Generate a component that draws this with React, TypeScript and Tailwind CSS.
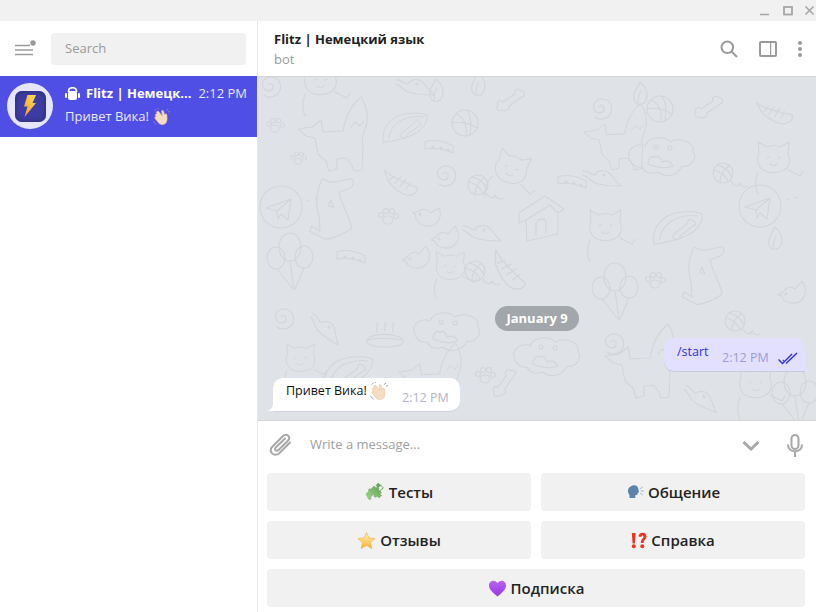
import React from "react";

const D = ({ x, y, s = 1, r = 0, children }: { x: number; y: number; s?: number; r?: number; children: React.ReactNode }) => (
  <g transform={`translate(${x} ${y}) rotate(${r}) scale(${s})`}>{children}</g>
);
const Spiral = () => <path d="M1 1c2-3 6-1 5 3-1 4-8 4-10-1-2-6 3-11 9-10 7 1 10 7 8 13-2 7-11 9-16 5" />;
const Bone = () => <path d="M-14 3c-4 2-7-3-4-5-2-4 3-6 5-3l12-8c-2-4 4-7 6-3 4-1 5 5 1 6l-13 9c1 4-4 6-7 4z" transform="translate(4 3)" />;
const Ball = () => <g><circle r="13" /><path d="M-9-9c6 2 12 10 10 22M2-13c4 6 5 14 3 25M-13 0c8-2 18 0 25 5" /></g>;
const Paw = () => <g><ellipse cx="0" cy="3" rx="5" ry="4" /><circle cx="-7" cy="-2" r="2.5" /><circle cx="-2" cy="-6" r="2.5" /><circle cx="4" cy="-6" r="2.5" /><circle cx="8" cy="-1" r="2.5" /></g>;
const Fox = () => <path d="M-40-10l14-2 9-7 2 12 20-1c3-16 8-25 18-34 6 10 9 22 3 35-1 4-3 8-1 14l-1 24-8 1-2-6-6-7-9 1 0 10-8 2-3-10-8-7-3-16-9-2z M26-18l-4 5-5-4-4 5" />;
const Dog = () => <path d="M-16-24l7 3 6 0 13-3c5-1 5 7 0 9l-10 4c3 14 11 24 12 34-6 5-22 12-26 10l-14-7 2-5 8 5-1-14c-3-12-4-20 3-36z M-8-4l-2 6 5 1z" />;
const Plane = () => <g><circle r="21" /><path d="M-15 1l25-9-3 21-7-6-3 5-1-8zM-4 4L10-8" /><path d="M26-7l3 1M34-9l3 1" /></g>;
const Balloons = () => <g><ellipse cx="0" cy="-14" rx="11" ry="14" /><ellipse cx="-14" cy="-3" rx="9" ry="11" /><ellipse cx="14" cy="-4" rx="9" ry="11" /><path d="M0 0l4 28M-13 8l16 20M14 7L5 28" /></g>;
const House = () => <g><path d="M-22-2L4-19l19 13-6 4v21L-14 26l-1-21-7 3zM-15 5L9-10l8 8" /><path d="M-5 20v-12c3-5 9-5 10-1v11" /></g>;
const Fish = () => <g><path d="M-12-16l5 8c6 7 14 15 19 19 2 4-4 7-10 5-7-3-11-12-14-20z" /><path d="M-10-5l6-2M-7 0l8-4M-3 5l8-5M2 9l6-4" /></g>;
const Collar = () => <g><path d="M-14-4c8-3 20-1 28 4v7c-8-4-20-6-28-4z" /><circle cx="-6" cy="1" r="1" /><circle cx="2" cy="2" r="1" /><circle cx="9" cy="4" r="1" /></g>;
const Yarn = () => <g><circle r="10" /><path d="M-9-3c6 1 13 7 14 12M-6-8c7 1 13 7 15 12M-3 9c0-7 5-14 9-16" /><path d="M8 8c3 6 8 6 9 2 2 4 5 5 8 3" /></g>;
const Mouse = () => <g><path d="M-17-5c6-1 7 4 12 4 3-5 10-6 14-2 3 2 6 8 12 13-10 0-18 0-26-3-5-2-7-6-12-8" /><circle cx="4" cy="-1" r="1" /></g>;
const Bird = () => <g><path d="M-12 4l5-3c3-5 8-6 12-3l7-8 3 6c2 8-3 17-13 16-6 0-10-4-10-7z" /><circle cx="-4" cy="3" r="1" /></g>;
const Cat = () => <g><path d="M-15-19l9 5c5-2 9-2 13 0l9-5-1 12c3 7 1 14-6 17-8 3-18 2-22-4-3-5-3-10-1-14z" /><path d="M-6-3l2-1M5-3l2-1M-3 3c2 2 5 2 7 0" /><path d="M-15 11c-3 8-3 16 0 22M15 9l12 6 3-5" /></g>;
const Bowl = () => <g><path d="M-26 18c-3-12 5-25 18-30 14-4 26-2 30 0 2 6-4 16-14 21-11 5-22 8-34 9z" /><path d="M-20 13c0-8 8-18 18-21 8-3 14-3 20-2" /><path d="M-5 7l13-10c-1-4 4-5 5-2 4 0 3 5 0 5L0 10c1 3-3 5-5 3-3 0-3-4 0-6z" /></g>;
const Cloud = () => <g><path d="M-30 4c-5-10 6-18 15-14 3-9 19-11 25-4 8-5 25-1 23 10 5 7-3 16-11 14-4 9-16 13-24 6-8 3-14 0-16-5-5 1-10-2-12-7z" /><path d="M-12 8c0-6 4-9 7-7 4-2 6 1 7 5 5-2 9 0 11 4-8 3-18 1-25-2z" /><circle cx="-4" cy="-9" r="2" /><circle cx="10" cy="-8" r="2" /></g>;
const Pie = () => <g><path d="M-18 4c4-7 28-8 36 0 2 4-4 7-18 7-12 0-20-3-18-7zM-18 4c12-3 24-2 36 0" /><path d="M-8-4c-2-3 2-5 0-9M0-5c-2-3 2-5 0-9M8-4c-2-3 2-5 0-9" /></g>;
const Leaf = () => <path d="M0-14c5 4 9 11 6 18-2 5-9 6-11 2-4-7 2-14 5-20zM-2 8c0-6 1-10 3-13" />;

function Doodles() {
  return (
    <svg className="absolute inset-0" width="558" height="344" viewBox="258 76 558 344" fill="none" stroke="#d1d6da" strokeWidth="1.1" strokeLinecap="round" strokeLinejoin="round">
      <D x={267} y={83}><Spiral /></D>
      <D x={320} y={82}><Cat /></D>
      <D x={338} y={138}><Fox /></D>
      <D x={407} y={125} s={0.9}><Bowl /></D>
      <D x={465} y={122}><Ball /></D>
      <D x={512} y={103}><Bone /></D>
      <D x={436} y={92}><Leaf /></D>
      <D x={478} y={86}><Leaf /></D>
      <D x={413} y={84}><Mouse /></D>
      <D x={439} y={145}><Collar /></D>
      <D x={275} y={125} s={0.9}><Paw /></D>
      <D x={298} y={158} s={0.8}><Paw /></D>
      <D x={401} y={180} r={-20}><Fish /></D>
      <D x={442} y={172}><Spiral /></D>
      <D x={478} y={184}><Yarn /></D>
      <D x={510} y={170} r={20}><Cat /></D>
      <D x={339} y={203} s={1.05}><Dog /></D>
      <D x={281} y={206}><Plane /></D>
      <D x={388} y={216}><Paw /></D>
      <D x={425} y={212} r={20}><Bird /></D>
      <D x={541} y={214}><House /></D>
      <D x={480} y={230}><Mouse /></D>
      <D x={443} y={235}><Bird /></D>
      <D x={414} y={255}><Bird /></D>
      <D x={290} y={260}><Balloons /></D>
      <D x={351} y={255}><Collar /></D>
      <D x={510} y={268} s={1.2}><Fish /></D>
      <D x={475} y={270}><Yarn /></D>
      <D x={450} y={268} s={0.9}><Cat /></D>
      <D x={598} y={105}><Spiral /></D>
      <D x={620} y={140} s={0.9}><Fox /></D>
      <D x={660} y={108}><Ball /></D>
      <D x={710} y={110}><Bone /></D>
      <D x={775} y={110} r={-30}><Fish /></D>
      <D x={640} y={95}><Leaf /></D>
      <D x={660} y={155}><Cloud /></D>
      <D x={600} y={175}><Mouse /></D>
      <D x={723} y={172}><Yarn /></D>
      <D x={773} y={160}><Cat /></D>
      <D x={760} y={205}><Plane /></D>
      <D x={605} y={228}><Cat /></D>
      <D x={680} y={225}><Bowl /></D>
      <D x={572} y={180}><Collar /></D>
      <D x={615} y={290}><Balloons /></D>
      <D x={710} y={270}><Dog /></D>
      <D x={655} y={280}><Paw /></D>
      <D x={790} y={290}><Bird /></D>
      <D x={775} y={240}><Leaf /></D>
      <D x={445} y={330}><Cloud /></D>
      <D x={385} y={335}><Pie /></D>
      <D x={300} y={360} s={0.9}><Cat /></D>
      <D x={280} y={315}><Spiral /></D>
      <D x={325} y={325} r={30}><Mouse /></D>
      <D x={350} y={370}><Bowl /></D>
      <D x={435} y={380} s={0.9}><Fox /></D>
      <D x={485} y={375}><Paw /></D>
      <D x={507} y={385} r={-20}><Bone /></D>
      <D x={545} y={355}><Cloud /></D>
      <D x={610} y={340}><Spiral /></D>
      <D x={645} y={365}><Fox /></D>
      <D x={700} y={395} r={20}><Mouse /></D>
      <D x={755} y={385}><Cat /></D>
      <D x={795} y={395}><Balloons /></D>
      <D x={735} y={320}><Yarn /></D>
    </svg>
  );
}

const Wave = ({ size }: { size: number }) => (
  <svg width={size} height={size} viewBox="0 0 20 20" className="inline-block shrink-0">
    <path d="M6 3.5l4.5 5.5-1-5c-.3-1.5 1.6-2 2.2-.6l1.3 4.1c.4-1.5 2.4-1.3 2.5.3.2 3 .6 5.5-.6 8-1.5 3-5.4 3.6-8.2 1.5L2.2 11.6c-1-1.1.4-2.4 1.5-1.5L2.8 8.4c-.9-1.2.6-2.5 1.7-1.5L3.9 5.5c-.6-1.3 1.1-2.4 2.1-2z" fill="#f6dcc1" stroke="#e3bd98" strokeWidth=".5" />
    <path d="M2 2.5L3.6 1M5.5 1l1-1M15 2.5l1.5-1M17 4.5l1.5-.7" stroke="#8a93b0" strokeWidth=".9" strokeLinecap="round" />
    <path d="M1 15c.5 1.3 1.2 2.2 2.5 3" stroke="#8a93b0" strokeWidth=".9" fill="none" strokeLinecap="round" />
  </svg>
);

const Puzzle = () => (
  <svg width="20" height="20" viewBox="0 0 20 20">
    <defs><linearGradient id="pz" x1="0" y1="1" x2="1" y2="0"><stop offset="0" stopColor="#a8d58e" /><stop offset="1" stopColor="#4f9a45" /></linearGradient></defs>
    <path d="M1 12l3-3c-1.500-1.500 .5-3 1.800-1.800L9 4l2 2c1.500-2 4-.5 2.500 1.500L15 9l3-3.500-2-2c1.500-1.500 0 0 0 0L13 1l-2 2.500 2 2 3-2 2.500 2.500-3.500 3 1.500 1.500c-2 .8-1.500 3.500.5 2.500l-3 3-2-2c-.5 2-3.500 1.500-3-.5l-1-1-2.500 3c1.500 1.500-.5 3-2 1.500z" fill="url(#pz)" stroke="#5d9f53" strokeWidth=".4" />
  </svg>
);
const Star = () => (
  <svg width="19" height="19" viewBox="0 0 20 20">
    <defs><linearGradient id="st" x1="0" y1="0" x2="0" y2="1"><stop offset="0" stopColor="#fff1b8" /><stop offset="1" stopColor="#f9b531" /></linearGradient></defs>
    <path d="M10 1.500l2.600 5.800 6.400.7-4.800 4.200 1.400 6.200L10 15.200l-5.600 3.200 1.400-6.200L1 8l6.400-.7z" fill="url(#st)" stroke="#efb046" strokeWidth=".7" strokeLinejoin="round" />
  </svg>
);
const Speaking = () => (
  <svg width="18" height="18" viewBox="0 0 18 18">
    <path d="M6.500 2.500c3.500-1 6 1.200 6 4.300 0 1 .7 1.800.5 2.500l-1.300.4c.2 1.500-.3 2.500-2.300 2.300l-.2 3H3.500v-3C1.500 9.500.5 4.500 6.500 2.500z" fill="#5d84a8" />
    <path d="M14.500 5.500l2-1.300M15 8h2.500M14.500 10.500l2 1.300" stroke="#9fb2c4" strokeWidth=".9" strokeLinecap="round" />
  </svg>
);
const Heart = () => (
  <svg width="19" height="19" viewBox="0 0 20 20">
    <defs><linearGradient id="ht" x1="0" y1="0" x2="0" y2="1"><stop offset="0" stopColor="#b765ee" /><stop offset="1" stopColor="#9b35e8" /></linearGradient></defs>
    <path d="M10 18.500C6 15 1 11.500 1 6.700 1 3.700 3.300 1.800 5.700 1.800c1.900 0 3.400 1 4.300 2.600.9-1.600 2.400-2.600 4.300-2.600C16.700 1.800 19 3.700 19 6.700c0 4.800-5 8.300-9 11.800z" fill="url(#ht)" />
  </svg>
);
const Interrobang = () => (
  <svg width="16" height="17" viewBox="0 0 16 17" fill="#e5391f">
    <path d="M.8 1h3.900l-.8 10.500H1.600z" />
    <circle cx="2.800" cy="14.200" r="2" />
    <path d="M7.500 4.500C7.500 2 9.500.8 11.500.8c2.400 0 4 1.500 4 3.700 0 2.800-3 3.300-2.900 6.500h-2.700c-.3-3.800 2.500-4.400 2.500-6.200 0-.8-.4-1.400-1-1.400s-1 .6-1 1.700z" />
    <circle cx="11.300" cy="14.200" r="2" />
  </svg>
);

const KeyButton = ({ icon, label, className = "" }: { icon: React.ReactNode; label: string; className?: string }) => (
  <div className={`h-[38px] flex items-center justify-center gap-[4px] rounded-[4px] bg-[#f1f1f1] text-[15px] font-semibold text-[#222] ${className}`}>
    {icon}
    <span>{label}</span>
  </div>
);

export default function App() {
  return (
    <div className="w-[816px] h-[612px] overflow-hidden flex flex-col bg-white text-[13px] font-['Open_Sans',sans-serif]">
      <div className="h-[21px] shrink-0 bg-[#f1f1f1] flex items-center justify-end">
        <svg width="60" height="21" viewBox="0 0 60 21" fill="none" stroke="#a6a6a6" strokeWidth="1.500">
          <path d="M4 14.500h9" />
          <rect x="28" y="7" width="8" height="7.500" strokeWidth="1.800" />
          <path d="M49.500 6.500l8 8M57.500 6.500l-8 8" strokeWidth="1.600" />
        </svg>
      </div>
      <div className="flex flex-1 min-h-0">
        <aside className="w-[258px] shrink-0 border-r border-[#e6e6e6] flex flex-col">
          <div className="h-[55px] shrink-0 flex items-center pl-[15px] pr-[11px]">
            <svg width="21" height="17" viewBox="0 0 21 17" className="shrink-0">
              <path d="M0 5.500h15M0 10h18M0 14.500h18" stroke="#9a9a9a" strokeWidth="1.700" fill="none" />
              <circle cx="18" cy="3" r="2.700" fill="#9a9a9a" />
            </svg>
            <div className="ml-[15px] flex-1 h-[32px] rounded-[4px] bg-[#f1f1f1] flex items-center pl-[14px] text-[#9a9a9a] text-[13px]">Search</div>
          </div>
          <div className="h-[61px] shrink-0 bg-[#4f4fe6] flex text-white pl-[7px] pr-[10px] pt-[7px]">
            <div className="relative w-[46px] h-[46px] shrink-0 rounded-full bg-[#e5e5fb] flex items-center justify-center">
              <div className="w-[31px] h-[31px] rounded-[7px] bg-[#3c3ca4] flex items-center justify-center shadow-[inset_0_0_5px_#2a2a66]">
                <svg width="14" height="22" viewBox="0 0 14 22">
                  <defs><linearGradient id="bolt" x1="1" y1="0" x2="0" y2="1"><stop offset="0" stopColor="#ffe04d" /><stop offset="1" stopColor="#f59a3c" /></linearGradient></defs>
                  <path d="M4.500 0H13L9.500 8H13L1.500 22 4.500 11.500H1z" fill="url(#bolt)" />
                </svg>
              </div>
            </div>
            <div className="ml-[12px] flex-1 min-w-0 flex flex-col">
              <div className="h-[21px] flex items-center justify-between">
                <div className="flex items-center">
                  <svg width="15" height="14" viewBox="0 0 15 14" className="shrink-0 mr-[6px]">
                    <path d="M3.500 5V4.500C3.500-.5 11.500-.5 11.500 4.500V5" stroke="#fff" strokeWidth="1.600" fill="none" />
                    <rect x="3" y="4" width="9" height="9" rx="2" fill="#fff" />
                    <rect x="0" y="6" width="2" height="5" rx="1" fill="#fff" />
                    <rect x="13" y="6" width="2" height="5" rx="1" fill="#fff" />
                  </svg>
                  <span className="font-bold text-[13px] whitespace-nowrap">Flitz | Немецк...</span>
                </div>
                <span className="text-[13px] text-[#e8e8ff] whitespace-nowrap">2:12 PM</span>
              </div>
              <div className="h-[26px] flex items-center gap-[4px] text-[#e8e8ff] text-[13px]">
                <span>Привет Вика!</span>
                <Wave size={18} />
              </div>
            </div>
          </div>
        </aside>
        <main className="flex-1 min-w-0 flex flex-col">
          <header className="h-[55px] shrink-0 flex items-center pl-[16px] pr-[14px] justify-between">
            <div className="flex flex-col leading-[20px]">
              <span className="font-bold text-[13px] text-[#222]">Flitz | Немецкий язык</span>
              <span className="text-[13px] text-[#999]">bot</span>
            </div>
            <div className="flex items-center gap-[21px]">
              <svg width="18" height="18" viewBox="0 0 18 18" fill="none" stroke="#9a9a9a" strokeWidth="2">
                <circle cx="7.300" cy="7.300" r="5.800" />
                <path d="M11.500 11.500l5.500 5.500" />
              </svg>
              <svg width="18" height="16" viewBox="0 0 18 16" fill="none" stroke="#9a9a9a" strokeWidth="2">
                <rect x="1" y="1" width="16" height="14" rx="1" />
                <rect x="11" y="1" width="6" height="14" fill="#9a9a9a" stroke="none" />
                <rect x="12.200" y="2" width="3.800" height="12" fill="#fff" stroke="none" />
              </svg>
              <svg width="4" height="16" viewBox="0 0 4 16" fill="#9a9a9a">
                <circle cx="2" cy="2" r="2" />
                <circle cx="2" cy="8" r="2" />
                <circle cx="2" cy="14" r="2" />
              </svg>
            </div>
          </header>
          <section className="relative h-[345px] shrink-0 bg-[#dfe3e7] border-t border-b border-[#d4d4d4] overflow-hidden flex flex-col justify-end">
            <Doodles />
            <div className="relative flex flex-col pb-[9px]">
              <div className="self-center mb-[7px] h-[25px] px-[11px] rounded-full bg-[#a2a7ab] text-white font-bold text-[13px] flex items-center">January 9</div>
              <div className="self-end mr-[11px] mb-[7px] relative h-[33px] w-[141px] rounded-[10px] rounded-br-none bg-[#e2e0fe] shadow-[0_1px_0_#c9cad8] pl-[13px] pt-[4px]">
                <span className="text-[#3131d8] text-[12.500px]">/start</span>
                <span className="absolute left-[58px] top-[11px] text-[12.500px] text-[#9d9adb]">2:12 PM</span>
                <svg className="absolute left-[114px] top-[14px]" width="20" height="13" viewBox="0 0 20 13" fill="none" stroke="#2f2fe0" strokeWidth="1.400">
                  <path d="M.5 7.500l4 4L14 2M8 11.500L19 1M11.500 10.500" />
                  <path d="M6 8l-1 1" />
                </svg>
                <svg className="absolute -right-[6px] bottom-0" width="6" height="8" viewBox="0 0 6 8"><path d="M0 0c0 4 2 7 6 8H0z" fill="#e2e0fe" /></svg>
              </div>
              <div className="self-start ml-[15px] relative h-[33px] w-[187px] rounded-[10px] rounded-bl-none bg-white shadow-[0_1px_0_#cfd2dc] pl-[13px] flex items-start pt-[4px] text-[12.500px] text-[#111]">
                <span>Привет Вика!</span>
                <span className="ml-[3px]"><Wave size={19} /></span>
                <span className="absolute left-[129px] top-[11px] text-[12.500px] text-[#b4b4c8]">2:12 PM</span>
                <svg className="absolute -left-[6px] bottom-0" width="6" height="8" viewBox="0 0 6 8"><path d="M6 0C6 4 4 7 0 8h6z" fill="#fff" /></svg>
              </div>
            </div>
          </section>
          <div className="h-[48px] shrink-0 flex items-center pl-[11px] pr-[13px]">
            <svg width="24" height="24" viewBox="0 0 24 24" fill="none" stroke="#a8a8a8" strokeWidth="2" strokeLinecap="round" className="shrink-0">
              <path d="M21 9.500L10.500 20c-2.600 2.600-6.400 2.400-8-.2-1.400-2.200-.8-4.500 1-6.300L14 3c1.800-1.800 4.300-1.600 5.500 0 1.100 1.500.8 3.300-.6 4.700L9.500 17c-1 1-2.300 1-3 .2-.7-.8-.5-2 .5-3L16 5.500" />
            </svg>
            <span className="ml-[17px] flex-1 text-[13px] text-[#a0a0a0]">Write a message...</span>
            <svg width="18" height="11" viewBox="0 0 18 11" fill="none" stroke="#a8a8a8" strokeWidth="3" className="mr-[27px]">
              <path d="M1.500 2l7.500 7 7.500-7" />
            </svg>
            <svg width="16" height="23" viewBox="0 0 16 23" fill="none" stroke="#a8a8a8" strokeWidth="2">
              <rect x="4.500" y="1" width="7" height="14" rx="3.500" />
              <path d="M1 10.500c0 4.300 3 6.800 7 6.800s7-2.500 7-6.800M8 17.500V23" />
            </svg>
          </div>
          <div className="grid grid-cols-2 gap-x-[10px] gap-y-[10px] pl-[9px] pr-[11px] pt-[4px]">
            <KeyButton icon={<Puzzle />} label="Тесты" />
            <KeyButton icon={<Speaking />} label="Общение" />
            <KeyButton icon={<Star />} label="Отзывы" />
            <KeyButton icon={<Interrobang />} label="Справка" />
            <KeyButton icon={<Heart />} label="Подписка" className="col-span-2" />
          </div>
        </main>
      </div>
    </div>
  );
}
